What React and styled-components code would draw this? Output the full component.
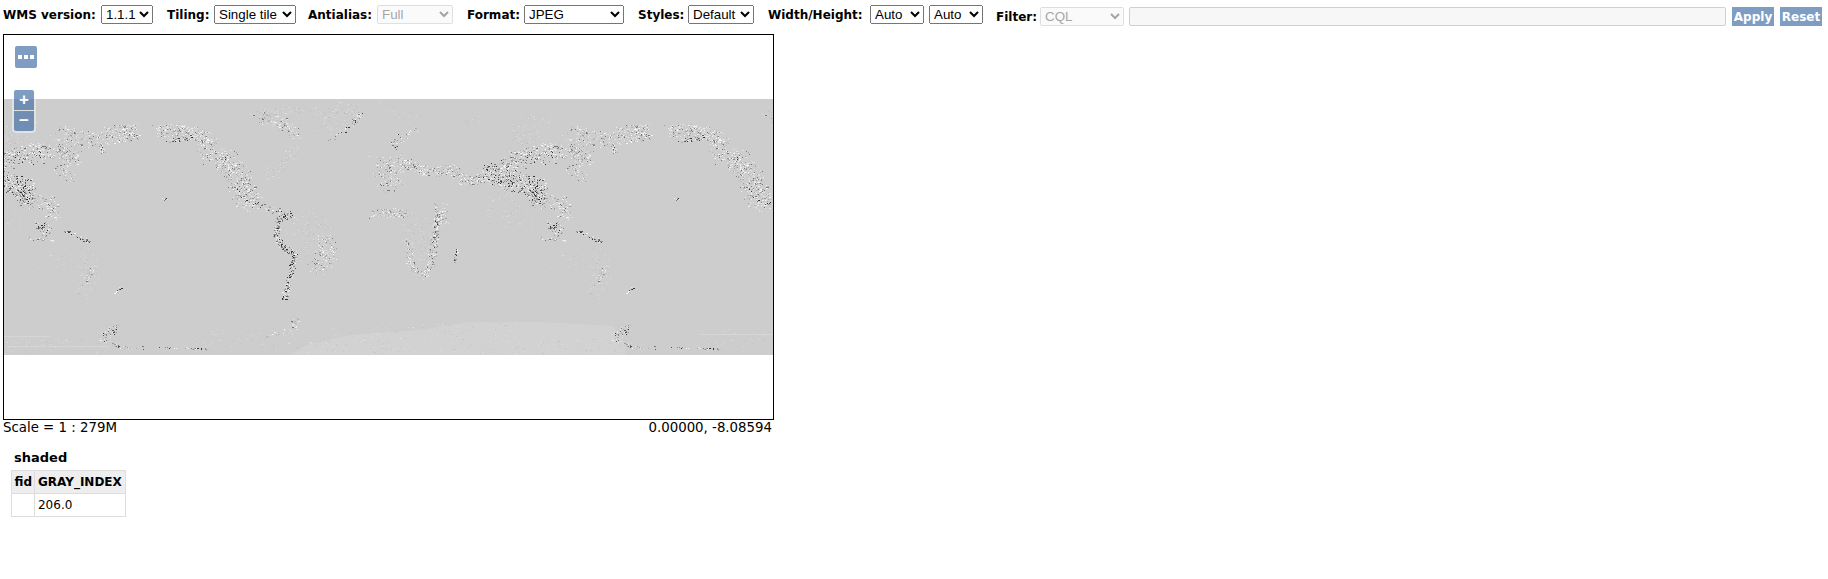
import React from "react";
import styled, { createGlobalStyle } from "styled-components";

const GlobalStyle = createGlobalStyle`
  html, body {
    margin: 0;
    padding: 0;
    background: #fff;
    font-family: "DejaVu Sans", Verdana, sans-serif;
    font-size: 12px;
    color: #000;
  }
`;

const Toolbar = styled.div`
  display: flex;
  align-items: flex-start;
  height: 34px;
  padding: 5px 0 0 3px;
  box-sizing: border-box;
  width: 1828px;
`;

const Group = styled.div`
  display: flex;
  align-items: center;
  height: 19px;
  margin-left: ${(p) => p.$gap || 0}px;
  margin-top: ${(p) => p.$drop || 0}px;
`;

const Label = styled.label`
  width: ${(p) => p.$w}px;
  flex: none;
  font-weight: bold;
  font-size: 12px;
  white-space: nowrap;
`;

const Select = styled.select`
  width: ${(p) => p.$w}px;
  height: 19px;
  box-sizing: border-box;
  font-family: "Liberation Sans", Arial, sans-serif;
  font-size: 13.33px;
  margin-right: ${(p) => p.$gap || 0}px;
  padding: 0;
`;

const FilterInput = styled.input`
  width: 597px;
  height: 19px;
  box-sizing: border-box;
  margin: 0 6px 0 5px;
  padding: 0;
  border: 1px solid #d0d0d0;
  border-radius: 2px;
  background: #f7f7f7;
`;

const ActionButton = styled.button`
  width: 42px;
  height: 19px;
  padding: 0;
  margin-right: ${(p) => p.$gap || 0}px;
  border: none;
  background: #7f9dc3;
  color: #fff;
  font-family: "DejaVu Sans", Verdana, sans-serif;
  font-size: 12px;
  font-weight: bold;
`;

const MapFrame = styled.div`
  position: relative;
  width: 771px;
  height: 386px;
  margin-left: 3px;
  box-sizing: border-box;
  border: 1px solid #000;
  background: #fff;
`;

const MapPicture = styled.svg`
  display: block;
  width: 769px;
  height: 384px;
`;

const OverflowButton = styled.div`
  position: absolute;
  left: 11px;
  top: 11px;
  width: 22px;
  height: 22px;
  display: flex;
  align-items: center;
  justify-content: center;
  gap: 2px;
  border-radius: 2px;
  background: #7f9dc3;
`;

const Dot = styled.span`
  width: 4px;
  height: 4px;
  background: #fff;
`;

const ZoomControl = styled.div`
  position: absolute;
  left: 8px;
  top: 53px;
  padding: 2px;
  border-radius: 4px;
  background: rgba(255, 255, 255, 0.4);
  display: flex;
  flex-direction: column;
  gap: 1px;
`;

const ZoomButton = styled.div`
  width: 20px;
  height: 20px;
  display: flex;
  align-items: center;
  justify-content: center;
  background: rgba(0, 60, 136, 0.5);
  border-radius: ${(p) => (p.$top ? "2px 2px 0 0" : "0 0 2px 2px")};
  color: #fff;
  font-family: "Liberation Sans", Arial, sans-serif;
  font-size: 17px;
  font-weight: bold;
  line-height: 20px;
`;

const StatusRow = styled.div`
  display: flex;
  justify-content: space-between;
  width: 769px;
  margin-left: 3px;
  height: 16px;
  line-height: 16px;
  font-size: 13.33px;
`;

const Results = styled.div`
  padding: 14px 0 0 11px;
`;

const LayerTitle = styled.div`
  font-weight: bold;
  font-size: 13px;
  line-height: 16px;
  margin: 0 0 4px 3px;
`;

const Table = styled.table`
  border-collapse: collapse;
  font-size: 12px;
`;

const Th = styled.th`
  height: 22px;
  padding: 0 2.5px;
  border: 1px solid #ddd;
  background: #eee;
  font-weight: bold;
  text-align: left;
  &:last-child {
    padding-right: 3px;
  }
`;

const Td = styled.td`
  height: 22px;
  padding: 0 2.5px;
  border: 1px solid #ddd;
`;

// speckle bands in page pixels: points, spread, count, tone
const bands = [
  // americas
  [[[157, 131], [178, 129], [198, 134], [212, 143]], 5, 280, "mid"],
  [[[168, 141], [190, 137]], 2, 45, "dark"],
  [[[205, 148], [222, 160], [238, 175], [243, 192], [250, 202]], 9, 480, "mid"],
  [[[218, 155], [232, 170]], 4, 35, "dark"],
  [[[236, 190], [250, 203], [270, 208], [293, 217]], 3, 70, "dark"],
  [[[253, 113], [290, 110], [360, 112]], 3, 150, "faint"],
  [[[258, 115], [278, 122], [297, 133]], 5, 120, "mid"],
  [[[360, 113], [352, 124], [327, 140]], 2, 45, "dark"],
  [[[330, 120], [345, 112], [320, 130]], 10, 80, "faint"],
  [[[293, 150], [280, 167], [267, 177]], 5, 110, "faint"],
  [[[288, 213], [278, 220], [275, 235], [282, 247], [294, 253], [292, 270], [287, 287], [284, 298]], 2.4, 330, "dark"],
  [[[326, 240], [328, 257], [315, 267]], 7, 160, "mid"],
  [[[300, 225], [320, 235], [310, 255]], 12, 120, "faint"],
  [[[163, 198], [167, 199]], 1, 8, "dark"],
  // africa
  [[[372, 213], [407, 213]], 4, 100, "mid"],
  [[[441, 213], [435, 227], [433, 250], [430, 268], [420, 275]], 3.5, 210, "mid"],
  [[[438, 220], [433, 245]], 2, 30, "dark"],
  [[[409, 243], [410, 260], [418, 273]], 3, 100, "mid"],
  [[[415, 225], [420, 255]], 12, 130, "faint"],
  [[[457, 247], [454, 263]], 1, 25, "dark"],
  [[[378, 165], [395, 172], [385, 185]], 9, 150, "mid"],
  [[[397, 135], [393, 150]], 3, 20, "dark"],
  [[[377, 98], [400, 115], [420, 116]], 3, 26, "faint"],
  // eurasia
  [[[400, 160], [417, 168], [433, 172], [450, 168], [467, 183], [483, 177]], 4, 320, "mid"],
  [[[483, 175], [500, 172], [517, 157], [540, 150], [567, 150], [587, 157]], 6, 520, "mid"],
  [[[487, 172], [510, 180], [533, 187], [540, 197]], 8, 440, "dark"],
  [[[505, 165], [530, 158], [560, 155]], 6, 90, "dark"],
  [[[570, 132], [600, 140], [633, 133], [645, 132]], 7, 360, "mid"],
  [[[612, 147], [616, 153]], 2, 15, "dark"],
  [[[520, 115], [547, 120]], 3, 20, "faint"],
  [[[463, 122], [483, 118]], 3, 20, "faint"],
  [[[400, 140], [417, 128]], 2, 28, "mid"],
  [[[517, 133], [533, 135]], 8, 70, "faint"],
  [[[583, 177], [570, 170], [590, 160]], 4, 70, "mid"],
  [[[533, 200], [560, 203], [567, 217]], 6, 130, "mid"],
  [[[440, 207], [442, 220]], 5, 70, "mid"],
  [[[490, 200], [520, 215]], 16, 90, "faint"],
  [[[550, 223], [560, 233]], 4, 50, "dark"],
  [[[540, 238], [567, 240]], 1, 30, "mid"],
  [[[575, 230], [602, 242]], 1.2, 50, "dark"],
  [[[556, 260], [598, 257], [602, 277], [594, 288]], 8, 150, "faint"],
  [[[605, 268], [598, 283]], 2, 25, "mid"],
  [[[627, 292], [634, 287]], 1, 16, "dark"],
  // south
  [[[296, 320], [292, 330], [265, 337]], 3, 50, "mid"],
  [[[629, 327], [613, 338]], 3, 40, "dark"],
  [[[613, 338], [632, 347], [697, 348], [724, 349]], 1, 55, "dark"],
  [[[200, 338], [300, 340], [420, 333], [520, 332]], 8, 180, "faint"],
  [[[300, 345], [500, 347], [640, 345]], 6, 180, "faint"],
];

const tones = {
  dark: ["#333", "#555", "#777", "#888", "#f4f4f4", "#e8e8e8", "#e0e0e0", "#999", "#aaa"],
  mid: ["#eeeeee", "#e4e4e4", "#f6f6f6", "#b4b4b4", "#a0a0a0", "#777", "#e0e0e0", "#dadada", "#bbb"],
  faint: ["#d6d6d6", "#dcdcdc", "#c2c2c2", "#c7c7c7"],
};

const makeSpeckles = () => {
  let seed = 20240611;
  const rand = () => {
    seed = (seed + 0x6d2b79f5) | 0;
    let t = Math.imul(seed ^ (seed >>> 15), 1 | seed);
    t = (t + Math.imul(t ^ (t >>> 7), 61 | t)) ^ t;
    return ((t ^ (t >>> 14)) >>> 0) / 4294967296;
  };
  const byColor = {};
  bands.forEach(([pts, spread, count, tone]) => {
    for (let i = 0; i < count; i++) {
      const at = rand() * (pts.length - 1);
      const k = Math.min(Math.floor(at), pts.length - 2);
      const f = at - k;
      const x = pts[k][0] + (pts[k + 1][0] - pts[k][0]) * f + (rand() - 0.5) * spread * 2.4;
      const y = pts[k][1] + (pts[k + 1][1] - pts[k][1]) * f + (rand() - 0.5) * spread * 2.4;
      const list = tones[tone];
      const color = list[Math.floor(rand() * list.length)];
      const w = rand() > 0.85 ? 2 : 1;
      // the tile repeats every 512px
      [-512, 0, 512].forEach((dx) => {
        const px = Math.round(x + dx);
        const py = Math.round(y);
        if (px < 4 || px > 771 || py < 99 || py > 354) return;
        byColor[color] = (byColor[color] || "") + `M${px} ${py}h${w}v1h-${w}z`;
      });
    }
  });
  return Object.entries(byColor);
};

const speckles = makeSpeckles();

const WorldMap = () => (
  <MapPicture viewBox="4 35 769 384" shapeRendering="crispEdges">
    <rect x="4" y="99" width="769" height="256" fill="#cdcdcd" />
    <path d="M307 345 L350 335 L420 330 L468 322 L540 322 L613 326 L625 345 L625 355 L290 355 Z" fill="#d2d2d2" />
    <path d="M4 336 H50 V337 H4 Z M700 334 H773 V335 H700 Z M4 346 H110 V347 H4 Z" fill="#d6d6d6" />
    {speckles.map(([color, d]) => (
      <path key={color} d={d} fill={color} />
    ))}
  </MapPicture>
);

export default function App() {
  return (
    <>
      <GlobalStyle />
      <Toolbar>
        <Group>
          <Label $w={98}>WMS version:</Label>
          <Select $w={52} defaultValue="1.1.1">
            <option>1.1.1</option>
            <option>1.3.0</option>
          </Select>
        </Group>
        <Group $gap={14}>
          <Label $w={47}>Tiling:</Label>
          <Select $w={82} defaultValue="Single tile">
            <option>Single tile</option>
            <option>Tiled</option>
          </Select>
        </Group>
        <Group $gap={12}>
          <Label $w={69}>Antialias:</Label>
          <Select $w={76} disabled defaultValue="Full">
            <option>Full</option>
          </Select>
        </Group>
        <Group $gap={14}>
          <Label $w={57}>Format:</Label>
          <Select $w={100} defaultValue="JPEG">
            <option>JPEG</option>
            <option>PNG</option>
          </Select>
        </Group>
        <Group $gap={14}>
          <Label $w={50}>Styles:</Label>
          <Select $w={66} defaultValue="Default">
            <option>Default</option>
          </Select>
        </Group>
        <Group $gap={14}>
          <Label $w={102}>Width/Height:</Label>
          <Select $w={54} $gap={5} defaultValue="Auto">
            <option>Auto</option>
          </Select>
          <Select $w={54} defaultValue="Auto">
            <option>Auto</option>
          </Select>
        </Group>
        <Group $gap={13} $drop={2}>
          <Label $w={44}>Filter:</Label>
          <Select $w={84} disabled defaultValue="CQL">
            <option>CQL</option>
          </Select>
          <FilterInput disabled />
          <ActionButton $gap={6}>Apply</ActionButton>
          <ActionButton>Reset</ActionButton>
        </Group>
      </Toolbar>
      <MapFrame>
        <WorldMap />
        <OverflowButton>
          <Dot />
          <Dot />
          <Dot />
        </OverflowButton>
        <ZoomControl>
          <ZoomButton $top>+</ZoomButton>
          <ZoomButton>−</ZoomButton>
        </ZoomControl>
      </MapFrame>
      <StatusRow>
        <span>Scale = 1 : 279M</span>
        <span>0.00000, -8.08594</span>
      </StatusRow>
      <Results>
        <LayerTitle>shaded</LayerTitle>
        <Table>
          <thead>
            <tr>
              <Th>fid</Th>
              <Th>GRAY_INDEX</Th>
            </tr>
          </thead>
          <tbody>
            <tr>
              <Td></Td>
              <Td>206.0</Td>
            </tr>
          </tbody>
        </Table>
      </Results>
    </>
  );
}
